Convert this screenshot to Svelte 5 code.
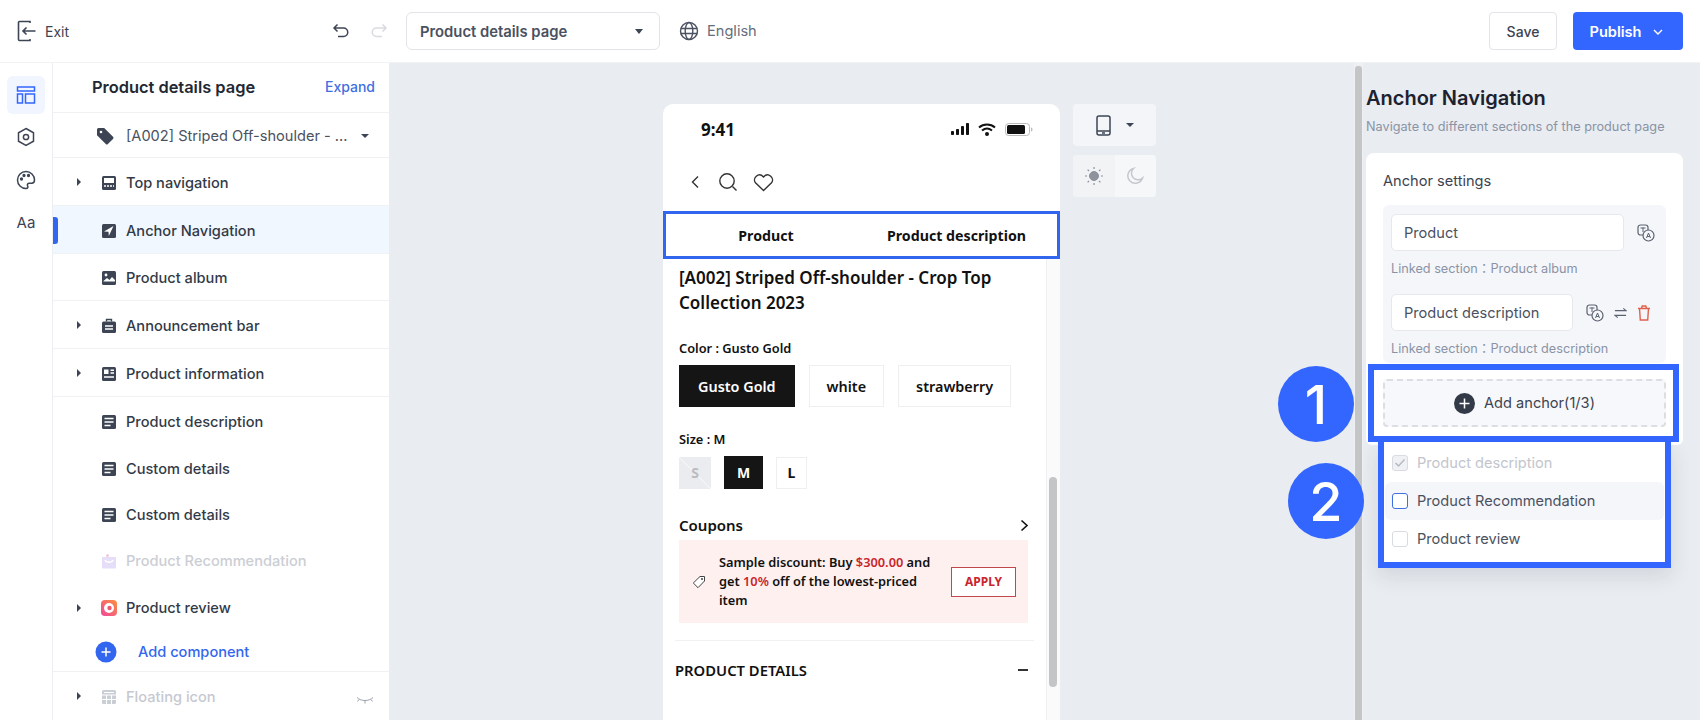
<script>
const rows = [
  { label: 'Top navigation', icon: 'topnav', h: 48, arrow: true, line: true },
  { label: 'Anchor Navigation', icon: 'anchor', h: 48, active: true, line: true },
  { label: 'Product album', icon: 'album', h: 47, line: true },
  { label: 'Announcement bar', icon: 'bag', h: 48, arrow: true, line: true },
  { label: 'Product information', icon: 'info', h: 48, arrow: true, line: true },
  { label: 'Product description', icon: 'doc', h: 48 },
  { label: 'Custom details', icon: 'doc', h: 46 },
  { label: 'Custom details', icon: 'doc', h: 46 },
  { label: 'Product Recommendation', icon: 'gift', h: 47, muted: true },
  { label: 'Product review', icon: 'review', h: 47, arrow: true }
];
const sizes = ['S', 'M', 'L'];
const colors = ['Gusto Gold', 'white', 'strawberry'];
const options = [
  { label: 'Product description', state: 'checked' },
  { label: 'Product Recommendation', state: 'hover' },
  { label: 'Product review', state: '' }
];
</script>

{#snippet translate()}
  <svg class="tr" viewBox="0 0 18 18" fill="none" stroke="#5b6270" stroke-width="1.2">
    <rect x="1" y="1" width="10" height="10" rx="2.5" />
    <circle cx="11.5" cy="11.5" r="5.500" fill="#f5f6fa" />
    <path d="M3.500 4h5M6 3.500v4.500M9.500 14l2-5 2 5M10.200 12.500h2.600" stroke-width="1" />
  </svg>
{/snippet}

{#snippet rowIcon(name)}
  <svg class="ri" viewBox="0 0 16 16">
    {#if name === 'topnav'}
      <rect x="1" y="1" width="14" height="14" rx="1.500" fill="#3d4555" />
      <rect x="3" y="3" width="10" height="5" fill="#fff" />
      <path d="M3 11h10" stroke="#fff" stroke-width="1.500" stroke-dasharray="2 1" />
    {:else if name === 'anchor'}
      <rect x="1" y="1" width="14" height="14" rx="1.500" fill="#3d4555" />
      <path d="M12.500 3 3 8.500l4.500.3.300 4.200z" fill="#fff" />
    {:else if name === 'album'}
      <rect x="1" y="1" width="14" height="14" rx="1.500" fill="#3d4555" />
      <circle cx="5" cy="5" r="1.400" fill="#fff" />
      <path d="M2.500 11l3.500-3 2.500 2 2.500-3 3 3v1.500h-11.500z" fill="#fff" />
    {:else if name === 'bag'}
      <path d="M5.500 3.500V1.500h5v2" fill="none" stroke="#3d4555" stroke-width="1.400" />
      <rect x="1" y="3.500" width="14" height="11.500" rx="1.500" fill="#3d4555" />
      <path d="M4 8h8M4 11h8" stroke="#fff" stroke-width="1.400" />
    {:else if name === 'info'}
      <rect x="1" y="1" width="14" height="14" rx="1.500" fill="#3d4555" />
      <rect x="3" y="3.500" width="4.500" height="4.500" fill="#fff" />
      <path d="M9.500 4.200H13M9.500 7H13M3 11h10" stroke="#fff" stroke-width="1.400" />
    {:else if name === 'doc'}
      <rect x="1" y="1" width="14" height="14" rx="1.500" fill="#3d4555" />
      <path d="M3.500 4.500h9M3.500 8h9M3.500 11.500h6" stroke="#fff" stroke-width="1.500" />
    {:else if name === 'gift'}
      <path d="M1 4h14v10.500a1 1 0 0 1-1 1H2a1 1 0 0 1-1-1z" fill="#e6def8" />
      <circle cx="6.500" cy="2.500" r="1.500" fill="#f4c6dc" />
      <path d="M4 7c1 3 7 3 8 0" fill="none" stroke="#fff" stroke-width="1.300" />
    {:else if name === 'review'}
      <rect x="0" y="0" width="16" height="16" rx="4" fill="url(#rv)" />
      <circle cx="8" cy="8" r="5" fill="#fff" />
      <circle cx="8.500" cy="8" r="2.200" fill="#f0566d" />
    {:else}
      <rect x="1" y="1" width="14" height="14" rx="1.500" fill="#c9cdd4" />
      <path d="M1 6h14M1 10.500h14M5.500 6v9M10.500 6v9M3 3.500h10" stroke="#fff" stroke-width="1.100" />
    {/if}
  </svg>
{/snippet}

<svg class="defs" width="0" height="0">
  <defs>
    <linearGradient id="rv" x1="0" y1="1" x2="1" y2="0">
      <stop offset="0" stop-color="#f0479c" />
      <stop offset="1" stop-color="#fb8f3c" />
    </linearGradient>
  </defs>
</svg>

<div class="page">
  <header class="top">
    <svg class="exit" viewBox="0 0 20 22" fill="none" stroke="#3d4555" stroke-width="1.600">
      <path d="M13 3V1.500H2.500a1 1 0 0 0-1 1v17a1 1 0 0 0 1 1H13V19M18.500 11H6M9.500 7.500 6 11l3.500 3.500" />
    </svg>
    <span class="exit-label">Exit</span>
    <svg class="undo" viewBox="0 0 18 16" fill="none" stroke="#3d4555" stroke-width="1.500">
      <path d="M5.500 1.500 2 5l3.500 3.500M2 5h9.500a4.200 4.200 0 0 1 0 8.500H6" />
    </svg>
    <svg class="redo" viewBox="0 0 18 16" fill="none" stroke="#d9dbe0" stroke-width="1.500">
      <path d="M12.500 1.500 16 5l-3.500 3.500M16 5H6.500a4.200 4.200 0 0 0 0 8.500H12" />
    </svg>
    <div class="select">
      <span>Product details page</span>
      <i class="caret"></i>
    </div>
    <svg class="globe" viewBox="0 0 20 20" fill="none" stroke="#4a5160" stroke-width="1.400">
      <circle cx="10" cy="10" r="8.500" />
      <ellipse cx="10" cy="10" rx="3.800" ry="8.500" />
      <path d="M1.500 7.500h17M1.500 12.500h17" />
    </svg>
    <span class="lang">English</span>
    <button class="save">Save</button>
    <button class="publish">
      Publish
      <svg viewBox="0 0 10 6" fill="none" stroke="#fff" stroke-width="1.400"><path d="M1 1l4 4 4-4" /></svg>
    </button>
  </header>

  <main class="main">
    <nav class="rail">
      <div class="rail-btn on">
        <svg viewBox="0 0 20 20" fill="none" stroke="#3366ff" stroke-width="1.500">
          <rect x="1.500" y="2" width="17" height="4" />
          <rect x="1.500" y="9" width="5" height="9" />
          <rect x="9.500" y="9" width="9" height="9" />
        </svg>
      </div>
      <div class="rail-btn">
        <svg viewBox="0 0 20 20" fill="none" stroke="#3d4555" stroke-width="1.500">
          <path d="M10 1.500l7.500 4.300v8.400L10 18.500l-7.500-4.300V5.800z" />
          <circle cx="10" cy="10" r="2.600" />
        </svg>
      </div>
      <div class="rail-btn">
        <svg viewBox="0 0 20 20" fill="none" stroke="#3d4555" stroke-width="1.500">
          <path d="M10 1.500a8.500 8.500 0 1 0 0 17c2 0 2.200-1.500 1.600-2.600-.7-1.300 0-2.700 1.600-2.700h2.500c1.700 0 2.800-1.200 2.800-3.200 0-4.600-3.900-8.500-8.500-8.500z" />
          <circle cx="5.500" cy="9" r=".9" fill="#3d4555" />
          <circle cx="8" cy="5.500" r=".9" fill="#3d4555" />
          <circle cx="12.500" cy="5.500" r=".9" fill="#3d4555" />
        </svg>
      </div>
      <div class="rail-btn aa">Aa</div>
    </nav>

    <aside class="tree">
      <div class="tree-head">
        <strong>Product details page</strong>
        <span>Expand</span>
      </div>
      <div class="tree-product">
        <svg viewBox="0 0 18 18"><path d="M1 2.500A1.500 1.500 0 0 1 2.500 1h5.700L17 9.800a1.500 1.500 0 0 1 0 2.100L11.900 17a1.500 1.500 0 0 1-2.100 0L1 8.200z" fill="#3d4555" /><circle cx="5" cy="5" r="1.300" fill="#fff" /></svg>
        <span>[A002] Striped Off-shoulder - ...</span>
        <i class="caret small"></i>
      </div>
      {#each rows as r}
        <div class="row" class:active={r.active} class:muted={r.muted} class:line={r.line} style="height:{r.h}px">
          {#if r.arrow}<i class="arrow"></i>{/if}
          {@render rowIcon(r.icon)}
          <span>{r.label}</span>
        </div>
      {/each}
      <div class="add-comp">
        <svg viewBox="0 0 22 22"><circle cx="11" cy="11" r="10.500" fill="#3366ee" /><path d="M11 6.500v9M6.500 11h9" stroke="#fff" stroke-width="1.500" /></svg>
        <span>Add component</span>
      </div>
      <div class="row floating">
        <i class="arrow"></i>
        {@render rowIcon('grid')}
        <span>Floating icon</span>
        <svg class="eye" viewBox="0 0 18 8" fill="none" stroke="#9aa0ab" stroke-width="1"><path d="M1 1.500c4 4 12 4 16 0M3 3.500 1.500 5.500M9 5v2.500M15 3.500l1.500 2" /></svg>
      </div>
    </aside>

    <section class="canvas">
      <div class="phone">
        <div class="status">
          <b>9:41</b>
          <span class="status-icons">
            <svg width="18" height="12" viewBox="0 0 18 12" fill="#111"><rect x="0" y="8" width="3" height="4" rx=".8" /><rect x="5" y="6" width="3" height="6" rx=".8" /><rect x="10" y="3" width="3" height="9" rx=".8" /><rect x="15" y="0" width="3" height="12" rx=".8" /></svg>
            <svg width="18" height="13" viewBox="0 0 18 13" fill="none" stroke="#111" stroke-width="2"><path d="M1 4.500c4.500-4 11.500-4 16 0M4 7.500c3-2.500 7-2.500 10 0" /><circle cx="9" cy="11" r="1" fill="#111" /></svg>
            <svg width="28" height="13" viewBox="0 0 28 13"><rect x=".5" y=".5" width="24" height="12" rx="3" fill="none" stroke="#bbb" /><rect x="2" y="2" width="18" height="9" rx="1.500" fill="#111" /><path d="M26 4.500v4c1-.3 1.500-1 1.500-2s-.5-1.700-1.500-2z" fill="#bbb" /></svg>
          </span>
        </div>
        <div class="phone-nav">
          <svg width="10" height="14" viewBox="0 0 10 14" fill="none" stroke="#333" stroke-width="1.400"><path d="M8 1.500 2.500 7 8 12.500" /></svg>
          <svg width="20" height="20" viewBox="0 0 20 20" fill="none" stroke="#333" stroke-width="1.400"><circle cx="9" cy="9" r="7.200" /><path d="M14.500 14.500l4 4" /></svg>
          <svg width="21" height="19" viewBox="0 0 21 19" fill="none" stroke="#333" stroke-width="1.400"><path d="M10.500 17.500 2.500 9.800C-1 5.500 5.500-1.500 10.500 4c5-5.500 11.500 1.500 8 5.800z" /></svg>
        </div>
        <div class="tabs">
          <span>Product</span>
          <span>Product description</span>
        </div>
        <div class="scroller">
          <div class="content">
            <h2>[A002] Striped Off-shoulder - Crop Top Collection 2023</h2>
            <p class="lbl first">Color : Gusto Gold</p>
            <div class="chips">
              {#each colors as c, i}
                <span class="chip" class:sel={i === 0}>{c}</span>
              {/each}
            </div>
            <p class="lbl second">Size : M</p>
            <div class="sizes">
              {#each sizes as s}
                <span class="size size-{s}">{s}</span>
              {/each}
            </div>
            <div class="coupons">
              <span>Coupons</span>
              <svg width="9" height="13" viewBox="0 0 9 13" fill="none" stroke="#111" stroke-width="1.600"><path d="M1.500 1.500 7 6.500l-5.500 5" /></svg>
            </div>
            <div class="coupon">
              <svg width="14" height="14" viewBox="0 0 14 14" fill="#fff" stroke="#444" stroke-width="1"><path d="M8 1.500h4.500V6L6 12.700 1.300 8z" /><circle cx="10" cy="4" r=".7" /></svg>
              <p>Sample discount: Buy <em>$300.00</em> and get <em>10%</em> off of the lowest-priced item</p>
              <span class="apply">APPLY</span>
            </div>
            <div class="details">
              <span>PRODUCT DETAILS</span>
              <i></i>
            </div>
          </div>
          <div class="track"><i></i></div>
        </div>
      </div>

      <div class="side-tools">
        <div class="tool">
          <svg width="15" height="21" viewBox="0 0 15 21" fill="none" stroke="#3d4555" stroke-width="1.500"><rect x="1" y="1" width="13" height="19" rx="2" /><path d="M1 16h13M6 18h3" /></svg>
          <i class="caret small"></i>
        </div>
        <div class="tool split">
          <span class="half">
            <svg width="20" height="20" viewBox="0 0 20 20" fill="#8d929c" stroke="#8d929c"><circle cx="10" cy="10" r="4.500" /><path d="M10 1v2M10 17v2M1 10h2M17 10h2M3.600 3.600 5 5M15 15l1.400 1.400M3.600 16.400 5 15M15 5l1.400-1.400" fill="none" stroke-width="1.200" /></svg>
          </span>
          <span class="half">
            <svg width="18" height="18" viewBox="0 0 18 18" fill="none" stroke="#c5c8ce" stroke-width="1.500"><path d="M7.500 1.500a7.500 7.500 0 1 0 9 9.500 6.500 6.500 0 0 1-9-9.500z" /></svg>
          </span>
        </div>
      </div>
    </section>

    <div class="vbar"><i></i></div>

    <aside class="panel">
      <h1>Anchor Navigation</h1>
      <p class="sub">Navigate to different sections of the product page</p>
      <div class="card">
        <div class="card-title">Anchor settings</div>
        <div class="anchors">
          <div class="anchor-row">
            <div class="input wide">Product</div>
            {@render translate()}
          </div>
          <div class="linked">Linked section：Product album</div>
          <div class="anchor-row">
            <div class="input narrow">Product description</div>
            {@render translate()}
            <svg class="swap" viewBox="0 0 14 12" fill="none" stroke="#5b6270" stroke-width="1.200"><path d="M1 3.500h12L10 1M13 8.500H1L4 11" /></svg>
            <svg class="trash" viewBox="0 0 14 16" fill="none" stroke="#e0604c" stroke-width="1.400"><path d="M1 3.500h12M4.500 3.500 5.200 1h3.600l.7 2.500M2.500 3.500l.8 11.500h7.400l.8-11.500" /></svg>
          </div>
          <div class="linked">Linked section：Product description</div>
        </div>
        <div class="add-wrap">
          <div class="add-anchor">
            <svg width="21" height="21" viewBox="0 0 21 21"><circle cx="10.500" cy="10.500" r="10.500" fill="#333a47" /><path d="M10.500 5.500v10M5.500 10.500h10" stroke="#fff" stroke-width="1.500" /></svg>
            <span>Add anchor(1/3)</span>
          </div>
          <div class="mark mark-one"></div>
          <span class="badge badge-one">1</span>
          <div class="menu">
            {#each options as o}
              <div class="opt opt-{o.state}">
                <span class="box">
                  {#if o.state === 'checked'}
                    <svg width="12" height="10" viewBox="0 0 12 10" fill="none" stroke="#b6bac4" stroke-width="1.500"><path d="M1.500 5l3 3 6-6.500" /></svg>
                  {/if}
                </span>
                <span>{o.label}</span>
              </div>
            {/each}
          </div>
          <span class="badge badge-two">2</span>
        </div>
      </div>
    </aside>
  </main>
</div>

<style>
:global(body) {
  margin: 0;
  background: #e9ecf0;
}
.defs {
  position: absolute;
}
.page {
  width: 1700px;
  height: 720px;
  overflow: hidden;
  display: flex;
  flex-direction: column;
  font-family: Inter, "Noto Sans CJK TC", "Liberation Sans", sans-serif;
  font-size: 14.6px;
  color: #3d4350;
}
.top {
  height: 62px;
  flex: none;
  background: #fff;
  display: flex;
  align-items: center;
  padding: 0 17px;
  box-sizing: border-box;
}
.exit {
  width: 20px;
  height: 22px;
}
.exit-label {
  margin-left: 8px;
  width: 287px;
  font-size: 14px;
}
.undo, .redo {
  width: 18px;
  height: 16px;
}
.redo {
  margin-left: 20px;
}
.select {
  margin-left: 18px;
  width: 254px;
  height: 38px;
  box-sizing: border-box;
  border: 1px solid #e2e4e9;
  border-radius: 6px;
  padding: 1px 16px 0 13px;
  display: flex;
  align-items: center;
  justify-content: space-between;
  font-weight: 600;
  font-size: 14.800px;
  color: #4a5160;
}
.caret {
  border: 4.500px solid transparent;
  border-top: 5px solid #3d4555;
  border-bottom: 0;
  width: 0;
  height: 0;
}
.caret.small {
  border-width: 4px 4px 0;
  border-color: #3d4555 transparent transparent;
}
.globe {
  margin-left: 19px;
  width: 20px;
  height: 20px;
}
.lang {
  margin-left: 8px;
  color: #666d7c;
  flex: 1;
}
button {
  font: inherit;
  height: 38px;
  border-radius: 4px;
  box-sizing: border-box;
  font-weight: 500;
}
.save {
  width: 68px;
  background: #fff;
  border: 1px solid #e2e4e9;
  color: #3d4350;
  font-size: 14px;
}
.publish {
  margin-left: 16px;
  width: 110px;
  padding: 1px 4px 0 0;
  background: #3366ff;
  border: 0;
  color: #fff;
  font-weight: 600;
  display: flex;
  align-items: center;
  justify-content: center;
  gap: 11px;
}
.publish svg {
  width: 10px;
  height: 6px;
}
.main {
  flex: 1;
  display: flex;
  min-height: 0;
  border-top: 1px solid #f1f2f4;
}
.rail {
  width: 53px;
  flex: none;
  box-sizing: border-box;
  background: #fff;
  border-right: 1px solid #eceef1;
  padding: 13px 0 0 7px;
  display: flex;
  flex-direction: column;
  gap: 4.400px;
}
.rail-btn {
  width: 38px;
  height: 38px;
  border-radius: 6px;
  display: flex;
  align-items: center;
  justify-content: center;
}
.rail-btn svg {
  width: 20px;
  height: 20px;
}
.rail-btn.on {
  background: #f0f5ff;
}
.aa {
  font-size: 15px;
  color: #3d4555;
}
.tree {
  width: 336px;
  flex: none;
  background: #fff;
  color: #333a47;
}
.tree-head {
  height: 50px;
  padding: 0 14px 2px 39px;
  box-sizing: border-box;
  display: flex;
  align-items: center;
  justify-content: space-between;
  border-bottom: 1px solid #f0f1f3;
}
.tree-head strong {
  font-size: 16.400px;
  font-weight: 600;
  color: #222833;
}
.tree-head span {
  color: #3f6fe0;
  font-weight: 500;
  font-size: 14px;
}
.tree-product {
  height: 45px;
  box-sizing: border-box;
  display: flex;
  align-items: center;
  padding: 1px 0 0 43px;
  border-bottom: 1px solid #f0f1f3;
}
.tree-product svg {
  width: 18px;
  height: 18px;
}
.tree-product span {
  margin-left: 12px;
  width: 235px;
  white-space: nowrap;
  overflow: hidden;
  color: #4a5160;
}
.row {
  position: relative;
  display: flex;
  align-items: center;
  padding: 1px 0 0 48px;
  box-sizing: border-box;
  font-weight: 500;
}
.row.line {
  border-bottom: 1px solid #f0f1f3;
  padding-top: 2px;
}
.row.active {
  background: #f0f7ff;
}
.row.active::before {
  content: "";
  position: absolute;
  left: 0;
  top: 11px;
  width: 5px;
  height: 27px;
  background: #3366ee;
  border-radius: 0 3px 3px 0;
}
.row.muted {
  color: #ccced4;
}
.arrow {
  position: absolute;
  left: 24px;
  top: 50%;
  margin-top: -4px;
  border-left: 4px solid #3d4555;
  border-top: 4px solid transparent;
  border-bottom: 4px solid transparent;
}
.ri {
  width: 16px;
  height: 16px;
  margin-right: 9px;
  flex: none;
}
.add-comp {
  height: 41px;
  display: flex;
  align-items: center;
  padding: 2px 0 0 42px;
  box-sizing: border-box;
  border-bottom: 1px solid #f0f1f3;
  color: #3366ee;
  font-weight: 500;
}
.add-comp svg {
  width: 22px;
  height: 22px;
  margin-right: 21px;
}
.floating {
  height: 48px;
  color: #c6c9cf;
}
.eye {
  position: absolute;
  right: 15px;
  top: 24px;
  width: 18px;
  height: 8px;
}
.canvas {
  flex: 1;
  display: flex;
  gap: 13px;
  padding: 41px 0 0 274px;
  min-width: 0;
  align-items: flex-start;
}
.phone {
  width: 397px;
  height: 620px;
  flex: none;
  background: #fff;
  border-radius: 10px 10px 0 0;
  display: flex;
  flex-direction: column;
  font-family: "Noto Sans", "Open Sans", sans-serif;
  color: #111;
}
.status {
  height: 48px;
  flex: none;
  display: flex;
  align-items: center;
  justify-content: space-between;
  padding: 2px 27px 0 38px;
  box-sizing: border-box;
}
.status b {
  font-size: 17px;
}
.status-icons {
  display: flex;
  align-items: center;
  gap: 9px;
}
.phone-nav {
  height: 59px;
  flex: none;
  display: flex;
  align-items: center;
  gap: 18px;
  padding: 1px 0 0 27px;
  box-sizing: border-box;
}
.phone-nav svg:last-child {
  margin-left: -3px;
}
.tabs {
  height: 48px;
  flex: none;
  box-sizing: border-box;
  border: 3px solid #3366ee;
  display: grid;
  grid-template-columns: 200px 1fr;
  align-items: center;
  font-size: 14.200px;
  font-weight: 700;
  text-align: center;
}
.tabs span:last-child {
  padding-right: 10px;
}
.scroller {
  flex: 1;
  display: flex;
  min-height: 0;
}
.content {
  flex: 1;
  padding: 6px 12px 0;
  box-sizing: border-box;
}
.content h2 {
  margin: 0 0 0 4px;
  font-size: 17px;
  line-height: 25px;
  font-weight: 600;
  width: 330px;
}
.lbl {
  margin: 0 0 0 4px;
  font-size: 12.800px;
  line-height: 16px;
  font-weight: 600;
}
.lbl.first {
  margin-top: 25px;
}
.lbl.second {
  margin-top: 24px;
}
.chips {
  display: flex;
  gap: 14px;
  margin: 9px 0 0 4px;
}
.chip {
  height: 42px;
  padding: 0 17px;
  box-sizing: border-box;
  border: 1px solid #eeeff1;
  display: flex;
  align-items: center;
  font-size: 14.400px;
  font-weight: 600;
}
.chip.sel {
  background: #151515;
  border-color: #151515;
  color: #fff;
  padding: 0 18px;
}
.sizes {
  display: flex;
  align-items: center;
  gap: 13px;
  margin: 9px 0 0 4px;
  height: 33px;
}
.size {
  font-size: 14px;
  font-weight: 700;
  display: flex;
  align-items: center;
  justify-content: center;
  height: 32px;
  box-sizing: border-box;
}
.size-S {
  width: 32px;
  background: linear-gradient(to top right, #eaecef 49%, #fafafa 49.500%, #fafafa 50.500%, #eaecef 51%);
  color: #bbbcc0;
}
.size-M {
  width: 39px;
  height: 33px;
  background: #151515;
  color: #fff;
}
.size-L {
  width: 31px;
  border: 1px solid #eeeff1;
}
.coupons {
  margin: 26px 5px 0 4px;
  display: flex;
  justify-content: space-between;
  align-items: center;
  font-weight: 600;
  font-size: 15px;
  height: 20px;
}
.coupon {
  margin: 5px 6px 0 4px;
  height: 83px;
  background: #fdf0ef;
  display: flex;
  align-items: center;
  padding-left: 13px;
}
.coupon p {
  margin: 0 0 0 13px;
  width: 218px;
  font-size: 12.800px;
  line-height: 19px;
  font-weight: 600;
}
.coupon em {
  font-style: normal;
  color: #c8262c;
}
.apply {
  margin-left: 14px;
  width: 65px;
  height: 30px;
  box-sizing: border-box;
  background: #fff;
  border: 1px solid #c0474b;
  color: #c8262c;
  font-size: 12px;
  font-weight: 700;
  display: flex;
  align-items: center;
  justify-content: center;
}
.details {
  margin: 17px 0 0;
  border-top: 1px solid #f0f1f3;
  height: 58px;
  display: flex;
  align-items: center;
  justify-content: space-between;
  font-weight: 600;
  font-size: 14.800px;
  padding-right: 1px;
}
.details i {
  width: 10px;
  height: 2px;
  background: #333;
  margin-right: 5px;
}
.track {
  width: 14px;
  flex: none;
  background: #fafafa;
  border-left: 1px solid #eff0f2;
  box-sizing: border-box;
  padding: 218px 3px 0 2px;
}
.track i {
  display: block;
  height: 210px;
  background: #c4c5c7;
  border-radius: 4px;
}
.side-tools {
  display: flex;
  flex-direction: column;
  gap: 9px;
}
.tool {
  width: 83px;
  height: 42px;
  background: #f4f5f8;
  border-radius: 4px;
  display: flex;
  align-items: center;
  justify-content: center;
  gap: 15px;
  box-sizing: border-box;
}
.tool.split {
  gap: 0;
  padding: 0;
  overflow: hidden;
}
.half {
  flex: 1;
  height: 100%;
  display: flex;
  align-items: center;
  justify-content: center;
}
.half:first-child {
  background: #f2f3f5;
}
.half:last-child {
  background: #f6f7f9;
}
.vbar {
  width: 9px;
  flex: none;
  box-sizing: border-box;
  padding: 3px 1px 0;
  background: #eef0f3;
}
.vbar i {
  display: block;
  height: 100%;
  background: #c4c5c7;
  border-radius: 3px 3px 0 0;
}
.panel {
  width: 337px;
  flex: none;
  box-sizing: border-box;
  padding: 0 17px 0 3px;
}
.panel h1 {
  margin: 21px 0 0;
  font-size: 20px;
  line-height: 28px;
  font-weight: 600;
  color: #1c2230;
}
.sub {
  margin: 7px 0 0;
  font-size: 12.700px;
  line-height: 16px;
  color: #8a93a6;
}
.card {
  margin-top: 18px;
  background: #fff;
  border-radius: 8px 8px 6px 6px;
  padding: 20px 17px 0;
  height: 292px;
  box-sizing: border-box;
}
.card-title {
  line-height: 17px;
  color: #3d4350;
}
.anchors {
  margin-top: 15px;
  background: #f5f6fa;
  border-radius: 6px;
  padding: 9px 8px 0;
  height: 158px;
  box-sizing: border-box;
}
.anchor-row {
  display: flex;
  align-items: center;
  gap: 10px;
}
.input {
  height: 37px;
  background: #fff;
  border: 1px solid #e6e8ee;
  border-radius: 5px;
  box-sizing: border-box;
  padding-left: 12px;
  display: flex;
  align-items: center;
  color: #4a5160;
}
.wide {
  width: 233px;
  margin-right: 3px;
}
.narrow {
  width: 182px;
  margin-right: 3px;
}
.tr {
  width: 18px;
  height: 18px;
  flex: none;
}
.swap {
  width: 13px;
  height: 12px;
}
.trash {
  width: 14px;
  height: 16px;
}
.linked {
  font-size: 12.700px;
  line-height: 16px;
  color: #8a93a6;
  margin: 10px 0 17px;
}
.add-wrap {
  position: relative;
  height: 48px;
  margin-top: 16px;
}
.add-anchor {
  height: 48px;
  box-sizing: border-box;
  border: 2px dashed #dcdee3;
  border-radius: 4px;
  background: #f7f8fb;
  display: flex;
  align-items: center;
  justify-content: center;
  gap: 9px;
  color: #3d4350;
}
.mark {
  position: absolute;
  box-sizing: border-box;
  border: 6px solid #3366ff;
}
.mark-one {
  left: -15px;
  right: -13px;
  top: -15px;
  height: 78px;
}
.menu {
  position: absolute;
  left: -5px;
  right: -5px;
  top: 63px;
  height: 126px;
  box-sizing: border-box;
  background: #fff;
  border: 6px solid #3366ff;
  border-top: 0;
  box-shadow: 0 8px 20px rgba(40, 50, 70, .12);
  padding: 2px 1px 0;
}
.opt {
  height: 38px;
  display: flex;
  align-items: center;
  gap: 9px;
  padding-left: 7px;
  border-radius: 6px;
  color: #4a5160;
}
.opt-hover {
  background: #f5f6fa;
}
.opt-checked {
  color: #c2c5cc;
}
.box {
  width: 16px;
  height: 16px;
  box-sizing: border-box;
  border: 1.500px solid #d9dbe2;
  border-radius: 3px;
  display: flex;
  align-items: center;
  justify-content: center;
  background: #fff;
}
.opt-checked .box {
  background: #f0f1f4;
}
.opt-hover .box {
  border-color: #3f6fe0;
}
.badge {
  position: absolute;
  width: 76px;
  height: 76px;
  border-radius: 50%;
  background: #3366ff;
  color: #fff;
  font-family: Inter, "Liberation Sans", sans-serif;
  font-weight: 500;
  font-size: 54px;
  display: flex;
  align-items: center;
  justify-content: center;
}
.badge-one {
  left: -105px;
  top: -13px;
}
.badge-two {
  left: -95px;
  top: 84px;
}
</style>
